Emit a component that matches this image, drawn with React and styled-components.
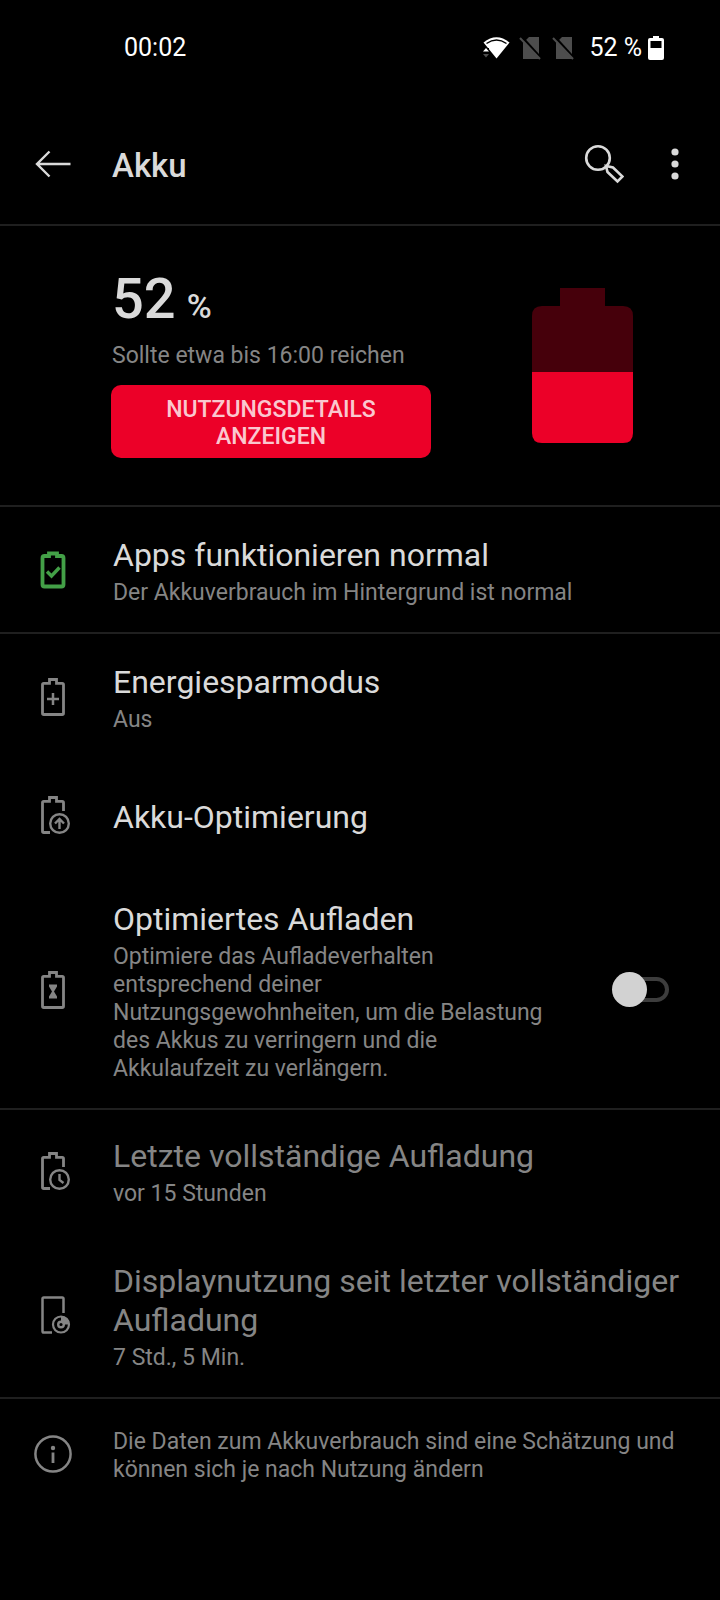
import React, { useState } from 'react'
import styled, { createGlobalStyle, css } from 'styled-components'

const colors = {
  text: '#dadada',
  muted: '#858585',
  line: '#1f1f1f',
  red: '#ec0028',
  darkRed: '#46000b',
  green: '#43a047',
}

const GlobalStyle = createGlobalStyle`
  body {
    background: #000;
    color: ${colors.text};
    font-family: Roboto, sans-serif;
    margin: 0;
  }
`

const Screen = styled.div`
  background: #000;
  min-height: 100vh;
`

const StatusBar = styled.div`
  align-items: center;
  box-sizing: border-box;
  color: white;
  display: flex;
  font-size: 25px;
  height: 104px;
  justify-content: space-between;
  line-height: 30px;
  padding: 0 56px 8px 124px;
`

const StatusIcons = styled.div`
  align-items: center;
  display: flex;
`

const SimIcon = styled.svg`
  margin-right: 11px;
`

const WifiIcon = styled.svg`
  margin-right: 9px;
`

const StatusPercent = styled.span`
  margin: 0 6px 0 4px;
`

const Toolbar = styled.header`
  align-items: center;
  border-bottom: 2px solid ${colors.line};
  display: flex;
  height: 120px;
  padding: 0 41px 0 32px;
`

const Title = styled.h1`
  flex: 1;
  font-size: 33px;
  font-weight: 500;
  line-height: 39px;
  margin: 3px 0 0 40px;
`

const IconButton = styled.button`
  background: transparent;
  border: none;
  color: ${colors.text};
  cursor: pointer;
  display: flex;
  margin-left: ${(props) => props.$gap || 0}px;
  padding: 0;
`

const Summary = styled.section`
  border-bottom: 2px solid ${colors.line};
  display: flex;
  justify-content: space-between;
  padding: 40px 87px 47px 111px;
`

const SummaryText = styled.div`
  flex: 0 1 320px;
`

const Level = styled.div`
  font-size: 56px;
  font-weight: 500;
  line-height: 66px;
  padding-left: 1px;
`

const LevelUnit = styled.span`
  font-size: 34px;
  margin-left: 11px;
`

const Estimate = styled.p`
  color: ${colors.muted};
  font-size: 23px;
  line-height: 28px;
  margin: 3px 0 15px 1px;
`

const DetailsButton = styled.button`
  background: ${colors.red};
  border: none;
  border-radius: 10px;
  color: rgba(255, 255, 255, 0.8);
  cursor: pointer;
  display: block;
  font-family: inherit;
  font-size: 23px;
  font-weight: 500;
  line-height: 27px;
  padding: 11px 40px 8px;
  text-transform: uppercase;
  width: 100%;
`

const BigBattery = styled.svg`
  margin-top: 22px;
`

// $overlap lets the rows start right under the line of the group above
const Group = styled.section`
  border-bottom: ${(props) => (props.$last ? 'none' : `2px solid ${colors.line}`)};
  margin-top: ${(props) => (props.$overlap ? -2 : 0)}px;
`

const Row = styled.div`
  align-items: center;
  display: flex;
  min-height: ${(props) => (props.$single ? 112 : 0)}px;
  padding-right: 33px;
`

const RowIcon = styled.div`
  color: ${(props) => props.$color || colors.muted};
  display: flex;
  flex: none;
  justify-content: center;
  width: 106px;
`

const RowText = styled.div`
  flex: 1;
  padding: 29px 0 25px 7px;
`

const rowTitle = css`
  color: ${(props) => (props.$muted ? colors.muted : colors.text)};
  display: block;
  font-size: 32px;
  font-weight: 400;
  line-height: 39px;
  margin: 0;
`

const RowTitle = styled.h2`
  ${rowTitle}
`

const RowLabel = styled.label`
  ${rowTitle}
`

const RowDetail = styled.p`
  color: ${colors.muted};
  font-size: 23px;
  line-height: 28px;
  margin: ${(props) => (props.$alone ? 0 : 4)}px 0 0;
`

const Switch = styled.input`
  align-items: center;
  appearance: none;
  background: transparent;
  cursor: pointer;
  display: flex;
  flex: none;
  height: 35px;
  margin: 0 18px 0 57px;
  position: relative;
  width: 57px;

  &::before {
    border: 4px solid #3d3d3d;
    border-radius: 13px;
    box-sizing: border-box;
    content: '';
    height: 25px;
    margin-left: 8px;
    width: 49px;
  }
  &::after {
    background: #d2d2d2;
    border-radius: 50%;
    content: '';
    height: 35px;
    left: ${(props) => (props.checked ? 22 : 0)}px;
    position: absolute;
    top: 0;
    width: 35px;
  }
`

const SimOff = () => (
  <SimIcon width="22" height="24" viewBox="0 0 22 24" aria-hidden="true">
    <path d="M10 1h10v22H4V7z" fill="#4d4d4d" />
    <path d="M2 0l20 22" stroke="#000" strokeWidth="2.5" />
    <path d="M1 2l20 21" stroke="#4d4d4d" strokeWidth="2" />
  </SimIcon>
)

const LineIcon = ({ children }) => (
  <svg width="38" height="38" viewBox="0 0 38 38" fill="none" stroke="currentColor" strokeWidth="2.8" aria-hidden="true">
    {children}
  </svg>
)

const BatteryOutline = () => (
  <path d="M9.8 5.3H15.5V1.5h7v3.8h5.7q1.3 0 1.3 1.3v28.6q0 1.3-1.3 1.3H9.8q-1.3 0-1.3-1.3V6.6q0-1.3 1.3-1.3z" />
)

const CutBattery = () => (
  <path d="M16 36.5H9.8q-1.3 0-1.3-1.3V6.6q0-1.3 1.3-1.3h5.7V1.5h7v3.8h5.7q1.3 0 1.3 1.3V15" />
)

const icons = {
  check: (
    <LineIcon>
      <path d="M10.5 5H15V2.5h8V5h4.500q2 0 2 2v26.500q0 2-2 2h-17q-2 0-2-2V7q0-2 2-2z" strokeWidth="3.8" />
      <path d="M13 20.5l4.5 4.5 8-8.5" strokeWidth="3.4" />
    </LineIcon>
  ),
  plus: (
    <LineIcon>
      <BatteryOutline />
      <path d="M19 15v12M13 21h12" strokeWidth="2.5" />
    </LineIcon>
  ),
  arrow: (
    <LineIcon>
      <CutBattery />
      <circle cx="25.5" cy="27.5" r="9.3" strokeWidth="2.4" />
      <path d="M25.5 33V23M21 27.5l4.5-4.5 4.5 4.5" strokeWidth="2.4" />
    </LineIcon>
  ),
  hourglass: (
    <LineIcon>
      <BatteryOutline />
      <path d="M15 13.5h8v2L20 20.5l3 5v2h-8v-2l3-5-3-5z" fill="currentColor" stroke="none" />
    </LineIcon>
  ),
  clock: (
    <LineIcon>
      <CutBattery />
      <circle cx="25.5" cy="27.5" r="9.3" strokeWidth="2.4" />
      <path d="M25.5 22v6l4 3" strokeWidth="2.4" />
    </LineIcon>
  ),
  display: (
    <LineIcon>
      <path d="M18 36.5H9.8q-1.3 0-1.3-1.3V2.8q0-1.3 1.3-1.3h18.4q1.3 0 1.3 1.3V17" strokeWidth="2.5" />
      <circle cx="27" cy="28.5" r="8" strokeWidth="2.2" />
      <circle cx="27" cy="28.5" r="2.8" strokeWidth="2.4" />
      <path d="M27 20A8.5 8.5 0 0 1 35.5 28.5H30A3 3 0 0 0 27 25.5z" fill="currentColor" stroke="none" />
    </LineIcon>
  ),
  info: (
    <LineIcon>
      <circle cx="19" cy="19" r="17.6" strokeWidth="2.5" />
      <circle cx="19" cy="13" r="2.2" fill="currentColor" stroke="none" />
      <path d="M19 17.5v10.5" strokeWidth="2.8" />
    </LineIcon>
  ),
}

const PreferenceRow = ({ icon, iconColor, title, detail, muted, htmlFor, children }) => (
  <Row $single={!detail}>
    <RowIcon $color={iconColor}>{icons[icon]}</RowIcon>
    <RowText>
      {title && !htmlFor && <RowTitle $muted={muted}>{title}</RowTitle>}
      {title && htmlFor && <RowLabel htmlFor={htmlFor}>{title}</RowLabel>}
      {detail && <RowDetail $alone={!title}>{detail}</RowDetail>}
    </RowText>
    {children}
  </Row>
)

const App = () => {
  const [optimized, setOptimized] = useState(false)

  return (
    <Screen>
      <GlobalStyle />
      <StatusBar>
        <span>00:02</span>
        <StatusIcons>
          <WifiIcon width="27" height="24" viewBox="0 0 27 24" aria-hidden="true">
            <path d="M0.5 6.500Q13.500-4 26.500 6.500L13.500 22.500z" fill="#fff" />
            <path d="M3.500 7.500Q13.500.5 23.500 7.500" stroke="#000" strokeWidth="1.5" fill="none" />
            <path d="M0 12h6v8H0z" fill="#000" />
            <path d="M0 15.5l3-3.500 3 3.500z" fill="#fff" />
            <path d="M0 18l3 3.500 3-3.500z" fill="#4d4d4d" />
          </WifiIcon>
          <SimOff />
          <SimOff />
          <StatusPercent>52 %</StatusPercent>
          <svg width="16" height="24" viewBox="0 0 16 24" aria-hidden="true">
            <path d="M5 0h6v2h3q2 0 2 2v18q0 2-2 2H2q-2 0-2-2V4q0-2 2-2h3z" fill="#fff" />
            <path d="M2.5 5h11v7h-11z" fill="#000" />
          </svg>
        </StatusIcons>
      </StatusBar>

      <Toolbar>
        <IconButton aria-label="Zurück">
          <svg width="40" height="28" viewBox="0 0 40 28" fill="none" stroke="currentColor" strokeWidth="2.4">
            <path d="M38.5 14H4.5M17.5 1.5L5 14l12.5 12.5" />
          </svg>
        </IconButton>
        <Title>Akku</Title>
        <IconButton aria-label="Suchen">
          <svg width="40" height="40" viewBox="0 0 40 40" fill="none" stroke="currentColor" strokeWidth="2.6">
            <circle cx="14" cy="14" r="11.8" />
            <path d="M22 22l1.500 6 10 9.500 5-5L29 23.500z" />
          </svg>
        </IconButton>
        <IconButton $gap={47} aria-label="Weitere Optionen">
          <svg width="8" height="34" viewBox="0 0 8 34" fill="currentColor">
            <circle cx="4" cy="5" r="3.6" />
            <circle cx="4" cy="17" r="3.6" />
            <circle cx="4" cy="29" r="3.6" />
          </svg>
        </IconButton>
      </Toolbar>

      <Summary>
        <SummaryText>
          <Level>
            52<LevelUnit>%</LevelUnit>
          </Level>
          <Estimate>Sollte etwa bis 16:00 reichen</Estimate>
          <DetailsButton>Nutzungsdetails anzeigen</DetailsButton>
        </SummaryText>
        <BigBattery width="101" height="155" viewBox="0 0 101 155" aria-hidden="true">
          <path d="M28 0h45v18h18q10 0 10 10v56H0V28q0-10 10-10h18z" fill={colors.darkRed} />
          <path d="M0 84h101v61q0 10-10 10H10q-10 0-10-10z" fill={colors.red} />
        </BigBattery>
      </Summary>

      <Group>
        <PreferenceRow
          icon="check"
          iconColor={colors.green}
          title="Apps funktionieren normal"
          detail="Der Akkuverbrauch im Hintergrund ist normal"
        />
      </Group>

      <Group>
        <PreferenceRow icon="plus" title="Energiesparmodus" detail="Aus" />
        <PreferenceRow icon="arrow" title="Akku-Optimierung" />
        <PreferenceRow
          icon="hourglass"
          title="Optimiertes Aufladen"
          htmlFor="optimized-charging"
          detail="Optimiere das Aufladeverhalten entsprechend deiner Nutzungsgewohnheiten, um die Belastung des Akkus zu verringern und die Akkulaufzeit zu verlängern."
        >
          <Switch
            id="optimized-charging"
            type="checkbox"
            checked={optimized}
            onChange={(e) => setOptimized(e.target.checked)}
          />
        </PreferenceRow>
      </Group>

      <Group $overlap>
        <PreferenceRow icon="clock" title="Letzte vollständige Aufladung" detail="vor 15 Stunden" muted />
        <PreferenceRow
          icon="display"
          title="Displaynutzung seit letzter vollständiger Aufladung"
          detail="7 Std., 5 Min."
          muted
        />
      </Group>

      <Group $last>
        <PreferenceRow
          icon="info"
          detail="Die Daten zum Akkuverbrauch sind eine Schätzung und können sich je nach Nutzung ändern"
        />
      </Group>
    </Screen>
  )
}

export default App
